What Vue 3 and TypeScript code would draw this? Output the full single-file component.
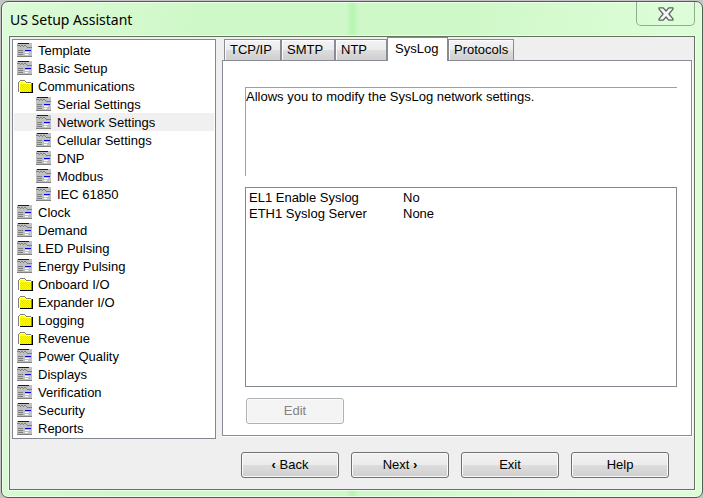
<script setup lang="ts">
import { ref } from 'vue'

interface TreeItem {
  label: string
  kind: 'form' | 'folder'
  child?: boolean
}

const items: TreeItem[] = [
  { label: 'Template', kind: 'form' },
  { label: 'Basic Setup', kind: 'form' },
  { label: 'Communications', kind: 'folder' },
  { label: 'Serial Settings', kind: 'form', child: true },
  { label: 'Network Settings', kind: 'form', child: true },
  { label: 'Cellular Settings', kind: 'form', child: true },
  { label: 'DNP', kind: 'form', child: true },
  { label: 'Modbus', kind: 'form', child: true },
  { label: 'IEC 61850', kind: 'form', child: true },
  { label: 'Clock', kind: 'form' },
  { label: 'Demand', kind: 'form' },
  { label: 'LED Pulsing', kind: 'form' },
  { label: 'Energy Pulsing', kind: 'form' },
  { label: 'Onboard I/O', kind: 'folder' },
  { label: 'Expander I/O', kind: 'folder' },
  { label: 'Logging', kind: 'folder' },
  { label: 'Revenue', kind: 'folder' },
  { label: 'Power Quality', kind: 'form' },
  { label: 'Displays', kind: 'form' },
  { label: 'Verification', kind: 'form' },
  { label: 'Security', kind: 'form' },
  { label: 'Reports', kind: 'form' },
]
const selected = ref('Network Settings')

const tabs: string[] = ['TCP/IP', 'SMTP', 'NTP', 'SysLog', 'Protocols']
const activeTab = ref('SysLog')

const settings: { name: string; value: string }[] = [
  { name: 'EL1 Enable Syslog', value: 'No' },
  { name: 'ETH1 Syslog Server', value: 'None' },
]
const actions: { label: string; before?: string; after?: string }[] = [
  { label: 'Back', before: '‹' },
  { label: 'Next', after: '›' },
  { label: 'Exit' },
  { label: 'Help' },
]
</script>

<template>
  <div class="desktop">
    <main class="window">
      <header class="titlebar">
        <h1>US Setup Assistant</h1>
        <button class="close" type="button" aria-label="Close">
          <svg width="16" height="14" viewBox="0 0 16 14">
            <path
              d="M1 .8h4.2L8 4l2.800-3.200H15v1.400L10.900 7l4.100 4.800v1.400h-4.200L8 10l-2.800 3.200H1v-1.400L5.100 7 1 2.200z"
              fill="#f4f6f5" stroke="#5a605e" stroke-width="1.200" stroke-linejoin="round"
            />
          </svg>
        </button>
      </header>

      <div class="client">
        <div class="content">
          <ul class="tree">
            <li v-for="item in items" :key="item.label">
              <button
                type="button"
                class="node"
                :class="{ child: item.child, selected: item.label === selected }"
                @click="selected = item.label"
              >
                <svg v-if="item.kind === 'form'" width="16" height="14" viewBox="0 0 16 14">
                  <rect width="15" height="14" fill="#c0c0c0" />
                  <g fill="#808080">
                    <rect y="2" width="3" height="1" />
                    <rect x="4" y="2" width="2" height="1" />
                    <rect x="7" y="2" width="2" height="1" />
                    <rect x="3" y="3" width="1" height="1" />
                    <rect x="6" y="3" width="1" height="1" />
                    <rect x="9" y="3" width="1" height="1" />
                    <rect x="10" y="4" width="5" height="1" />
                    <rect x="1" y="7" width="5" height="1" />
                    <rect x="1" y="9" width="5" height="1" />
                    <rect x="1" y="11" width="5" height="1" />
                    <rect y="13" width="15" height="1" />
                  </g>
                  <g fill="#0000ff">
                    <rect x="1" width="11" height="1" />
                    <rect x="8" y="7" width="6" height="1" />
                  </g>
                  <g fill="#ffffff">
                    <rect x="8" y="9" width="4" height="1" />
                    <rect x="8" y="11" width="3" height="1" />
                  </g>
                </svg>
                <svg v-else width="16" height="14" viewBox="0 0 16 14">
                  <path d="M14 4h2v10H3v-1h11z" fill="#000000" />
                  <path d="M3 1h5v1h1v1h5v1h1v9H1V3h1V2h1z" fill="#808080" />
                  <path d="M3 2h5v1h1v1h5v9H2V3h1z" fill="#ffffff" />
                  <path d="M3 3h5v1H3zM3 5h11v8H3z" fill="#ffff00" />
                  <path
                    v-for="row in 4"
                    :key="row"
                    :transform="`translate(0 ${row * 2})`"
                    d="M4 3h1v1H4zM6 3h1v1H6zM8 3h1v1H8zM10 3h1v1h-1zM12 3h1v1h-1zM3 4h1v1H3zM5 4h1v1H5zM7 4h1v1H7zM9 4h1v1H9zM11 4h1v1h-1zM13 4h1v1h-1z"
                    fill="#d0d0a0"
                  />
                </svg>
                <span>{{ item.label }}</span>
              </button>
            </li>
          </ul>

          <section class="pages">
            <div class="tabs" role="tablist">
              <button
                v-for="tab in tabs"
                :key="tab"
                type="button"
                role="tab"
                class="tab"
                :class="{ active: tab === activeTab }"
                :aria-selected="tab === activeTab"
                @click="activeTab = tab"
              >
                {{ tab }}
              </button>
            </div>
            <div class="panel" role="tabpanel">
              <p class="description">Allows you to modify the SysLog network settings.</p>
              <div class="list">
                <table>
                  <tbody>
                    <tr v-for="row in settings" :key="row.name">
                      <th scope="row">{{ row.name }}</th>
                      <td>{{ row.value }}</td>
                    </tr>
                  </tbody>
                </table>
              </div>
              <div class="edit">
                <button class="push" type="button" disabled>Edit</button>
              </div>
            </div>
          </section>
        </div>

        <footer class="actions">
          <button v-for="action in actions" :key="action.label" class="push" type="button">
            <b v-if="action.before">{{ action.before }}</b>
            {{ action.label }}
            <b v-if="action.after">{{ action.after }}</b>
          </button>
        </footer>
      </div>
    </main>
  </div>
</template>

<style>
body {
  margin: 0;
  background: #c4c4c4;
}
</style>

<style scoped>
* {
  box-sizing: border-box;
}

.desktop {
  display: flex;
  min-height: 100vh;
  padding: 1px 0 0 1px;
  font-family: "Liberation Sans", Arial, sans-serif;
  font-size: 13px;
  line-height: 16px;
  color: #000;
}

button {
  font: inherit;
  color: inherit;
}

.window {
  display: flex;
  flex: 1;
  flex-direction: column;
  min-width: 0;
  padding: 0 7px 7px;
  border: 1px solid #4f5f50;
  border-radius: 7px;
  background:
    linear-gradient(90deg, transparent 344px, #b9f6b3 349px, #b9f6b3 352px, transparent 357px),
    linear-gradient(100deg, #dcfbd8 0, #cff8c8 25%, #cff8c8 60%, #dcfdd7 85%);
  box-shadow: inset 0 0 0 1px #effdec;
}

.titlebar {
  display: flex;
  flex: none;
  align-items: flex-start;
  justify-content: space-between;
  height: 34px;
}

h1 {
  margin: 0;
  padding: 8px 0 0 1px;
  font-family: "Noto Sans", "Open Sans", sans-serif;
  font-size: 14px;
  font-weight: 400;
  line-height: 20px;
}

.close {
  display: flex;
  align-items: center;
  justify-content: center;
  width: 59px;
  height: 24px;
  padding: 0;
  border: 1px solid #93ab91;
  border-top: 0;
  border-radius: 0 0 5px 5px;
  background: transparent;
}

.client {
  display: flex;
  flex: 1;
  flex-direction: column;
  padding: 0 2px 11px;
  border: 1px solid #65735f;
  background: #efefef;
  box-shadow: 0 0 0 1px #effdec;
}

.content {
  display: flex;
  flex: 1;
  gap: 6px;
}

.tree {
  flex: none;
  width: 204px;
  margin: 2px 0 0;
  padding: 1px;
  border: 1px solid #828790;
  background: #fff;
  list-style: none;
}

.node {
  display: flex;
  align-items: center;
  gap: 5px;
  width: 100%;
  height: 18px;
  padding: 0 0 0 3px;
  border: 0;
  background: transparent;
  text-align: left;
}

.node span {
  padding-top: 2px;
}

.node.child {
  padding-left: 22px;
}

.node.selected {
  background: #f0f0f0;
}

.pages {
  display: flex;
  flex: 1;
  flex-direction: column;
  min-width: 0;
  padding-bottom: 3px;
}

.tabs {
  display: grid;
  grid-template-columns: 57px 54px 52px 61px 66px;
  align-items: end;
  height: 23px;
  padding-left: 2px;
}

.tab {
  height: 21px;
  padding: 0 0 0 5px;
  border: 1px solid #898c95;
  border-bottom: 0;
  background: linear-gradient(#f3f3f3 0, #ebebeb 50%, #dddddd 50%, #cfcfcf 100%);
  box-shadow: inset 1px 1px 0 #fcfcfc;
  text-align: left;
}

.tab.active {
  z-index: 1;
  height: 24px;
  margin-bottom: -1px;
  padding: 0 0 2px 7px;
  background: #fff;
}

.panel {
  display: flex;
  flex: 1;
  flex-direction: column;
  align-items: flex-start;
  padding: 26px 14px 10px 22px;
  border: 1px solid #898c95;
  background: #fff;
  box-shadow: 0 1px 0 #fff, 1px 0 0 #fff;
}

.description {
  align-self: stretch;
  height: 89px;
  margin: 0 0 11px;
  padding-top: 1px;
  border: solid #a0a0a0;
  border-width: 1px 0 0 1px;
}

.list {
  flex: 1;
  align-self: stretch;
  padding: 2px 3px;
  border: 1px solid #828790;
}

.edit {
  padding: 11px 1px 1px;
}

table {
  border-collapse: collapse;
}

th,
td {
  height: 16px;
  padding: 0;
  font-weight: 400;
  text-align: left;
}

th {
  width: 154px;
}

.actions {
  display: flex;
  justify-content: flex-end;
  gap: 12px;
  padding: 13px 23px 0 0;
}

.push {
  display: block;
  width: 98px;
  height: 26px;
  padding: 0;
  border: 1px solid #707070;
  border-radius: 3px;
  background: linear-gradient(#f2f2f2 0, #ebebeb 50%, #dddddd 50%, #cfcfcf 100%);
  box-shadow: inset 0 0 0 1px #fafafa;
}

.push:disabled {
  border-color: #adb2b5;
  background: #f4f4f4;
  color: #838383;
}
</style>
